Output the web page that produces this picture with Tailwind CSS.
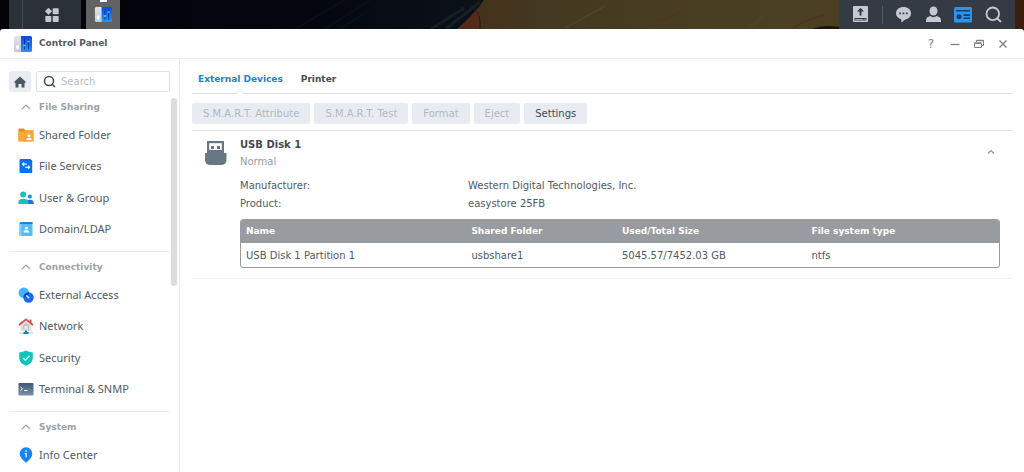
<!DOCTYPE html>
<html lang="en">
<head>
<meta charset="utf-8">
<title>Control Panel</title>
<script src="https://cdn.jsdelivr.net/npm/@tailwindcss/browser@4"></script>
</head>
<body class="flex h-screen flex-col overflow-hidden bg-[#03040b] font-['DejaVu_Sans',sans-serif] text-[10px] text-[#505a64]">

<!-- Desktop taskbar over the wallpaper -->
<header class="relative flex h-[29px] shrink-0 justify-between px-[9px]">
  <svg class="absolute inset-0 h-full w-full" viewBox="0 0 1024 29" preserveAspectRatio="none" aria-hidden="true">
    <defs>
      <linearGradient id="sky"><stop offset="0" stop-color="#020208"/><stop offset=".65" stop-color="#05070e"/><stop offset="1" stop-color="#0d131a"/></linearGradient>
      <linearGradient id="sand"><stop offset="0" stop-color="#443019"/><stop offset=".15" stop-color="#443820"/><stop offset=".6" stop-color="#4b4023"/><stop offset=".85" stop-color="#4b3c22"/><stop offset="1" stop-color="#3b1c0d"/></linearGradient>
    </defs>
    <path fill="url(#sky)" d="M0 0h490v29H0z"/>
    <path fill="url(#sand)" d="M484 0h540v29H457q8-7 14-13T484 0z"/>
    <path fill="#542b18" d="M477 9q4 6 3 20H458q8-7 19-20z"/>
    <path fill="none" stroke="#251b14" stroke-width="1" d="M475 10q6 5 5 19"/>
    <path fill="none" stroke="#151f27" stroke-width="3" d="M431 29 464 8M446 29l34-27"/>
    <path fill="none" stroke="#0d141b" d="M295 29 345 0M325 29 370 0M340 29l30-19"/>
    <path fill="none" stroke="#524930" d="M565 28 605 6M748 28l16-12"/>
    <path fill="none" stroke="#503420" stroke-width="1.500" d="M655 21q15-1 24-9M793 28q14-9 32-13"/>
    <path fill="#21140f" d="M812 29q12-5 28-2v2z"/>
  </svg>
  <div class="relative flex gap-[5px]">
    <div class="flex w-[72px] bg-[#2b3139]">
      <div class="w-[14px] border-r border-[#464c53]"></div>
      <button aria-label="Main Menu" class="flex flex-1 items-center justify-center">
        <svg class="size-[14px]" viewBox="0 0 14 14" fill="#c5c9cd"><path d="m3.500 0 3.300 3.300-3.300 3.300L.2 3.300z" stroke="#c5c9cd" stroke-width=".6"/><rect x="7.700" y=".3" width="6" height="6" rx=".8"/><rect x=".3" y="7.900" width="6" height="6" rx=".8"/><rect x="7.700" y="7.900" width="6" height="6" rx=".8"/></svg>
      </button>
    </div>
    <button aria-label="Control Panel" class="relative flex w-[34px] items-center justify-center bg-[#606264]">
      <span class="absolute top-0 h-[2px] w-[7px] bg-white"></span>
      <svg class="size-[19px]" viewBox="0 0 20 18"><use href="#panel"/></svg>
    </button>
  </div>
  <div class="relative flex w-[176px] items-center justify-between bg-[#343b44] pl-[13px] pr-[13px] text-[#c5cad1]">
    <button aria-label="Eject device"><svg class="size-[17px]" viewBox="0 0 17 17"><rect x="1" y="0" width="15" height="16" rx="1" fill="currentColor"/><path fill="#343b44" d="M8.500 1.700 12 5.600H9.500v4h-2v-4H5zM2.500 12h12v2.500h-12z"/><path fill="currentColor" d="M3.300 13h8v.8h-8zM12.500 13H14v.8h-1.500z"/></svg></button>
    <span class="h-[18px] w-px bg-[#555c64]"></span>
    <button aria-label="Chat"><svg class="size-[17px]" viewBox="0 0 17 17"><path fill="currentColor" d="M8.500 1C4.200 1 1 3.600 1 7.300c0 3.100 2.200 5.200 5.300 6v3.200l4.100-3.100C13.900 12.900 16 10.600 16 7.300 16 3.600 12.800 1 8.500 1z"/><path fill="#343b44" d="M4.200 6.500h1.700v1.700H4.200zM7.600 6.500h1.700v1.700H7.600zM11 6.500h1.700v1.700H11z"/></svg></button>
    <button aria-label="User"><svg class="size-[17px]" viewBox="0 0 17 17" fill="currentColor"><ellipse cx="8.500" cy="5" rx="4" ry="4.500"/><path d="M1 16v-1.500C1 12 2.500 10.800 5.300 10c1.800 1.500 4.600 1.500 6.400 0 2.800.8 4.300 2 4.300 4.500V16z"/></svg></button>
    <button aria-label="Widgets"><svg class="size-[18px]" viewBox="0 0 18 18"><rect y="1" width="18" height="15.500" rx="1.500" fill="#2b93f0"/><path fill="#233c59" d="M2 4h14v1.600H2zM9.500 8.300H16V10H9.500zM9.500 11.500H16v1.600H9.500z"/><circle cx="5" cy="10.800" r="2.500" fill="#233c59"/></svg></button>
    <button aria-label="Search"><svg class="size-[17px]" viewBox="0 0 17 17" fill="none" stroke="currentColor" stroke-width="1.800"><circle cx="7.800" cy="7.800" r="6.300"/><path d="m12.300 12.300 3.700 3.700"/></svg></button>
  </div>
</header>

<!-- Control Panel window -->
<main class="flex min-h-0 flex-1 flex-col rounded-t-[3px] bg-white">
  <div class="flex h-[30px] shrink-0 items-center justify-between border-b border-[#e9edef] pl-[13px] pr-[15px]">
    <div class="flex items-center gap-[6px]">
      <svg class="size-5" viewBox="0 0 20 18">
        <defs>
          <linearGradient id="pb" x2="0" y2="1"><stop stop-color="#0a48df"/><stop offset="1" stop-color="#2497ff"/></linearGradient>
          <linearGradient id="pg" x2="0" y2="1"><stop stop-color="#e3e5ee"/><stop offset="1" stop-color="#bfc7e3"/></linearGradient>
          <g id="panel">
            <rect x="1" y="1" width="8" height="16" rx="1.500" fill="url(#pg)"/>
            <path fill="url(#pb)" d="M8 1h9.500Q19 1 19 2.500v13q0 1.500-1.500 1.500H8z"/>
            <path stroke="#0537a4" d="M11.500 3.500v11M15.500 3.500v11"/>
            <path stroke="#6fc4ff" stroke-width="1.500" d="M10.300 10.500h2.400M14.300 6.500h2.400"/>
            <rect x="3" y="10" width="3" height="4.500" rx="1.500" fill="#fff"/>
          </g>
        </defs>
        <use href="#panel"/>
      </svg>
      <h1 class="pt-px text-[9px] font-bold">Control Panel</h1>
    </div>
    <div class="flex items-center gap-3 text-[#7b848c]">
      <button aria-label="Help" class="flex w-3 justify-center text-[12px] leading-3">?</button>
      <button aria-label="Minimize"><svg class="size-3" viewBox="0 0 12 12"><path stroke="currentColor" stroke-width="1.300" d="M1.500 6.500h9"/></svg></button>
      <button aria-label="Restore"><svg class="size-3" viewBox="0 0 12 12" fill="none" stroke="currentColor"><path d="M3.500 4V2.500h7v5H9M1.500 5.500h7v4h-7z"/><path d="M1.500 5h7M3.500 2.500h7" stroke-width="1.500"/></svg></button>
      <button aria-label="Close"><svg class="size-3" viewBox="0 0 12 12" fill="none" stroke="currentColor" stroke-width="1.400"><path d="m2.500 2.500 7 7M9.500 2.500l-7 7"/></svg></button>
    </div>
  </div>

  <div class="flex min-h-0 flex-1">
    <!-- Navigation -->
    <aside class="flex w-[180px] shrink-0 flex-col overflow-hidden border-r border-[#e4e9ec] pt-3">
      <div class="flex h-[21px] shrink-0 gap-[5px] pl-[9px] pr-[9px]">
        <button aria-label="Home" class="flex w-[22px] items-center justify-center rounded-[2px] bg-[#e9edf3]"><svg class="size-3" viewBox="0 0 12 12"><path fill="#4b5762" d="M6 .5 12 6l-1 1-.5-.5v5h-3V8h-3v3.500h-3v-5L1 7 0 6z"/></svg></button>
        <label class="flex min-w-0 flex-1 items-center gap-1 rounded-[2px] border border-[#dbe2e8] pl-[6px]">
          <svg class="size-[13px] shrink-0" viewBox="0 0 13 13" fill="none" stroke="#414b55" stroke-width="1.500"><circle cx="6" cy="6" r="4.500"/><path d="m9.200 9.200 2.800 2.800"/></svg>
          <input type="text" aria-label="Search" placeholder="Search" class="h-full w-full min-w-0 pl-px text-[10px] outline-none placeholder:text-[#b9bfc5]">
        </label>
      </div>
      <div class="flex min-h-0 flex-1">
        <nav class="min-w-0 flex-1 pl-[9px] pr-[2px] font-['Noto_Sans',sans-serif] text-[11px]">
          <section class="pb-[6px]">
            <button class="flex h-[27px] w-full items-center gap-2 pl-3 pt-1 font-['DejaVu_Sans',sans-serif] text-[9px] font-bold text-[#9ca2a8]"><svg class="size-[10px]" viewBox="0 0 10 10" fill="none" stroke="#9ca2a8" stroke-width="1.200"><path d="m1 6 4-4 4 4"/></svg>File Sharing</button>
            <div class="flex h-[126px] flex-col">
              <a href="#shared" class="flex flex-1 items-center gap-[5px] pl-[9px]"><svg class="size-4" viewBox="0 0 16 16"><path fill="#e88d13" d="M.5 1.500h5.300l1.500 1.800h8v11H.5z"/><path fill="#fba638" d="M5.500 14.500H2q-1.500 0-1.500-1.500V4.500h4.800L7 3.300h8.500v10q0 1.200-1.200 1.200z"/><circle cx="11" cy="8.700" r="1.500" fill="#fff"/><path fill="#fff" d="M8.300 13q0-2.300 2.700-2.300t2.700 2.300z"/></svg>Shared Folder</a>
              <a href="#services" class="flex flex-1 items-center gap-[5px] pl-[9px]"><svg class="size-4" viewBox="0 0 16 16"><path fill="#0770fb" d="M2.500 1H12l2.200 2.200V14q0 1-1 1H2.500q-1 0-1-1V2q0-1 1-1z"/><path fill="#044dc1" d="M12 1v2.200h2.200z"/><path fill="none" stroke="#d8efff" stroke-width="1.200" d="M6.200 4.500 4.500 6.200 6.200 8M4.500 6.200H9M10 7.500l1.700 1.800L10 11.200M11.700 9.300H7"/></svg>File Services</a>
              <a href="#users" class="flex flex-1 items-center gap-[5px] pl-[9px]"><svg class="size-4" viewBox="0 0 16 16"><circle cx="5.200" cy="4.500" r="3" fill="#17c3b2"/><circle cx="11.800" cy="6.500" r="2" fill="#2588e9"/><path fill="#246fe3" d="M8 14q0-4.300 3.800-4.300 4 0 4 3.800v.5z"/><path fill="#17c3b2" d="M.4 14v-1.500q0-3.800 5-3.800t5 3.800V14z"/></svg>User &amp; Group</a>
              <a href="#domain" class="flex flex-1 items-center gap-[5px] pl-[9px]"><svg class="size-4" viewBox="0 0 16 16"><rect x="1.500" y="1" width="13" height="14" rx="1" fill="#56bdfb"/><path fill="#2783cd" d="M2.500 1h12v2h-13z"/><rect x="1.500" y="3" width="2" height="12" fill="#7bd2ff"/><circle cx="8.300" cy="7" r="1.500" fill="#fff"/><path fill="#fff" d="M5.500 11.500q0-2.500 2.800-2.500t2.800 2.500z"/></svg>Domain/LDAP</a>
            </div>
          </section>
          <section class="border-t border-[#e5e9ec] pb-[6px]">
            <button class="flex h-[27px] w-full items-center gap-2 pl-3 pt-1 font-['DejaVu_Sans',sans-serif] text-[9px] font-bold text-[#9ca2a8]"><svg class="size-[10px]" viewBox="0 0 10 10" fill="none" stroke="#9ca2a8" stroke-width="1.200"><path d="m1 6 4-4 4 4"/></svg>Connectivity</button>
            <div class="flex h-[126px] flex-col">
              <a href="#external" class="flex flex-1 items-center gap-[5px] pl-[9px]"><svg class="size-4" viewBox="0 0 16 16"><circle cx="5.800" cy="5.800" r="5.300" fill="#43b3ff"/><circle cx="10.500" cy="10.500" r="5.200" fill="#176af3"/><path fill="#0d46bd" d="M5.300 9.600Q6.500 5.500 11 5.400q0 4.300-5.700 4.200z"/><path stroke="#e7f5ff" stroke-width="1.400" stroke-linecap="round" d="m8.700 8.700 2 2"/></svg>External Access</a>
              <a href="#network" class="flex flex-1 items-center gap-[5px] pl-[9px]"><svg class="size-4" viewBox="0 0 16 16"><path fill="#e3e1df" d="M2.500 6 8 2l5.500 4v7h-11z"/><path fill="#c0c1c2" d="M5 7.500 8 5l3 2.500v4H5z"/><path fill="#eee" d="M6.500 8h3v3h-3z"/><path fill="none" stroke="#cf5351" stroke-width="1.800" d="m1 7 7-5.600L15 7"/><path fill="#cf5351" d="M11.500 1.500h2v4l-2-2z"/><path stroke="#b5cbd8" d="M1 15h14"/><path fill="#147fc4" d="M7 12.500h2V14h1.500v2h-5v-2H7z"/></svg>Network</a>
              <a href="#security" class="flex flex-1 items-center gap-[5px] pl-[9px]"><svg class="size-4" viewBox="0 0 16 16"><path fill="#0bc7bb" d="M8 .5q3 1.800 6.800 1.900V8q0 5.300-6.800 7.800Q1.200 13.300 1.200 8V2.400Q5 2.300 8 .5z"/><path fill="none" stroke="#fff" stroke-width="1.300" d="m5 8 2.200 2.200L11.500 6"/></svg>Security</a>
              <a href="#terminal" class="flex flex-1 items-center gap-[5px] pl-[9px]"><svg class="size-4" viewBox="0 0 16 16"><defs><linearGradient id="tm" x2="0" y2="1"><stop stop-color="#3d5778"/><stop offset="1" stop-color="#7891ac"/></linearGradient></defs><rect x=".5" y="2" width="15" height="12.500" rx=".7" fill="url(#tm)"/><path fill="none" stroke="#fff" d="m2.500 6 2 1.800-2 1.800M6 9.500h3.500"/></svg>Terminal &amp; SNMP</a>
            </div>
          </section>
          <section class="border-t border-[#e5e9ec]">
            <button class="flex h-[27px] w-full items-center gap-2 pl-3 pt-1 font-['DejaVu_Sans',sans-serif] text-[9px] font-bold text-[#9ca2a8]"><svg class="size-[10px]" viewBox="0 0 10 10" fill="none" stroke="#9ca2a8" stroke-width="1.200"><path d="m1 6 4-4 4 4"/></svg>System</button>
            <a href="#info" class="flex h-8 items-center gap-[5px] pl-[9px]"><svg class="size-4" viewBox="0 0 16 16"><path fill="#1682fc" d="M8 .3a6.300 6.300 0 0 1 6.300 6.300q0 4.500-6.300 9.200-6.300-4.700-6.300-9.200A6.300 6.300 0 0 1 8 .3z"/><path fill="#fff" d="M7.300 3.200h1.400v1.500H7.300zM6.700 5.900h2v4.300H7.500V7h-.8z"/></svg>Info Center</a>
          </section>
        </nav>
        <div class="w-[8px] shrink-0 pt-[6px]"><div class="h-[188px] w-[6px] rounded-full bg-[#dcdddd]"></div></div>
      </div>
    </aside>

    <!-- Content -->
    <div class="min-w-0 flex-1 px-3 pt-2">
      <div role="tablist" class="flex h-[27px] items-center gap-[18px] border-b border-[#dee4e9] pl-[6px] text-[9px] font-bold text-[#414b55]">
        <button role="tab" aria-selected="true" class="relative flex h-full items-center text-[#1b84ce]">External Devices
          <svg class="absolute -bottom-px left-1/2 h-[5px] w-[10px] -translate-x-1/2" viewBox="0 0 10 5"><path fill="#fff" stroke="#dee4e9" d="M0 4.500h1l4-4 4 4h1"/><path fill="#fff" d="M2 4h6v1H2z"/></svg>
        </button>
        <button role="tab" aria-selected="false" class="flex h-full items-center">Printer</button>
      </div>
      <div class="flex h-[37px] items-center gap-1 border-b border-[#dee2e5] pt-[2px]">
        <button disabled class="h-[21px] rounded-[2px] bg-[#e8ecf2] px-[11px] text-[#b1b8c0]">S.M.A.R.T. Attribute</button>
        <button disabled class="h-[21px] rounded-[2px] bg-[#e8ecf2] px-[11px] text-[#b1b8c0]">S.M.A.R.T. Test</button>
        <button disabled class="h-[21px] rounded-[2px] bg-[#e8ecf2] px-[11px] text-[#b1b8c0]">Format</button>
        <button disabled class="h-[21px] rounded-[2px] bg-[#e8ecf2] px-[11px] text-[#b1b8c0]">Eject</button>
        <button class="h-[21px] rounded-[2px] bg-[#e8ecf2] px-[11px] text-[#414b55]">Settings</button>
      </div>
      <section class="flex border-b border-[#edf1f3] pb-[10px] pl-3 pr-3 pt-[6px]">
        <div class="w-9 shrink-0 pt-[3px]">
          <svg class="h-[26px] w-6" viewBox="0 0 24 26"><path fill="#697683" d="M3 1h17v12H3zM1 13h21.500v7q0 5-6 5H7q-6 0-6-5z"/><path fill="#fff" d="M5.200 3.200h12.600V10H5.200z"/><path fill="#697683" d="M7 6h3v3H7zM13 6h3v3h-3z"/></svg>
        </div>
        <div class="min-w-0 flex-1">
          <div class="flex items-center justify-between">
            <div>
              <h2 class="h-4 text-[10px] font-bold leading-4 text-[#414b55]">USB Disk 1</h2>
              <p class="h-[17px] leading-[17px] text-[#959ca4]">Normal</p>
            </div>
            <button aria-label="Collapse" class="pb-1 pr-[5px]"><svg class="size-2" viewBox="0 0 8 8" fill="none" stroke="#8b939a" stroke-width="1.200"><path d="m1 5.500 3-3 3 3"/></svg></button>
          </div>
          <dl class="grid grid-cols-[30%_1fr] pb-[6px] pt-[7px] leading-[18px]">
            <dt>Manufacturer:</dt><dd>Western Digital Technologies, Inc.</dd>
            <dt>Product:</dt><dd>easystore 25FB</dd>
          </dl>
          <div class="overflow-hidden rounded-[3px] border border-[#989ca0]">
            <table class="w-full table-fixed text-left">
              <thead class="bg-[#989ca0] text-[9px] text-white">
                <tr class="h-[23px]"><th class="w-[30%] px-[5px] font-bold">Name</th><th class="w-[20%] px-[3px] font-bold">Shared Folder</th><th class="w-[25%] px-[2px] font-bold">Used/Total Size</th><th class="px-[2px] font-bold">File system type</th></tr>
              </thead>
              <tbody><tr class="h-6"><td class="px-[5px]">USB Disk 1 Partition 1</td><td class="px-[3px]">usbshare1</td><td class="px-[2px]">5045.57/7452.03 GB</td><td class="px-[2px]">ntfs</td></tr></tbody>
            </table>
          </div>
        </div>
      </section>
    </div>
  </div>
</main>
</body>
</html>
